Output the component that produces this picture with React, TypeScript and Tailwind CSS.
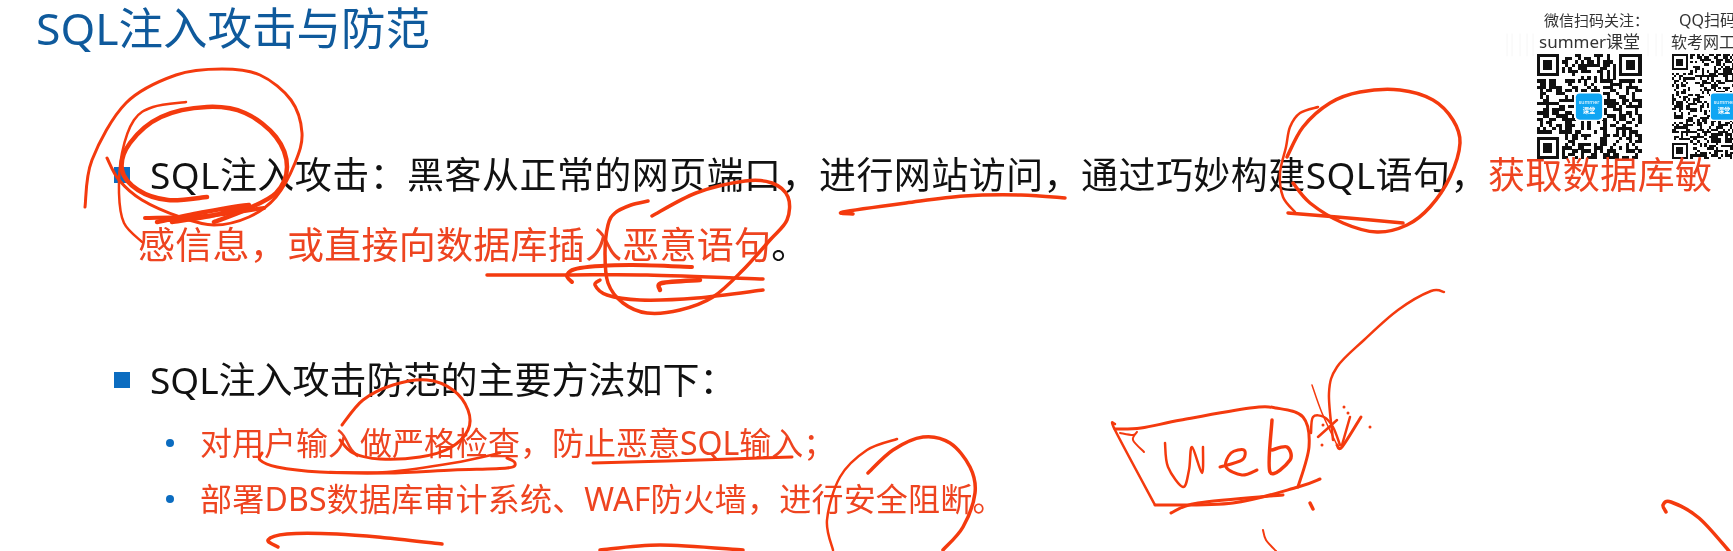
const INK = "#f43a0e";

type Pt = [number, number];
type Mark = { w: number; pts: Pt[] };

// hand-written pen strokes laid over the slide, in page pixels
const marks: Mark[] = [
  // first bullet circles
  { w: 3, pts: [[85, 207], [92, 160], [126, 103], [176, 75], [222, 69], [260, 75], [291, 100], [302, 133], [295, 163], [276, 197], [249, 217], [214, 225], [180, 217], [142, 200], [119, 180], [107, 158]] },
  { w: 4.5, pts: [[207, 197], [168, 200], [138, 190], [122, 170], [130, 143], [161, 117], [207, 107], [245, 113], [276, 137], [287, 167], [276, 193], [245, 210], [214, 222]] },
  { w: 2.5, pts: [[186, 102], [153, 107], [134, 120], [122, 153], [119, 193], [124, 223], [142, 242]] },
  { w: 4, pts: [[145, 218], [205, 216], [264, 208]] },
  { w: 4.5, pts: [[157, 222], [205, 212], [249, 205], [215, 215], [172, 222]] },
  // underline 网站访问
  { w: 3.5, pts: [[853, 214], [843, 212], [906, 203], [964, 196], [1021, 195], [1065, 198]] },
  // SQL circle
  { w: 2.5, pts: [[1318, 107], [1300, 113], [1290, 127], [1286, 147], [1280, 173], [1283, 197], [1295, 212]] },
  { w: 3.5, pts: [[1287, 157], [1303, 127], [1330, 103], [1360, 92], [1400, 90], [1433, 100], [1453, 120], [1460, 143], [1450, 177], [1430, 207], [1407, 225], [1377, 232], [1343, 223], [1310, 203], [1293, 183]] },
  { w: 3.5, pts: [[1288, 213], [1337, 217], [1403, 223]] },
  // 恶意语句 circle and strikes
  { w: 3.5, pts: [[652, 216], [696, 193], [745, 181], [772, 183], [788, 197], [787, 220], [770, 240], [743, 270], [713, 297], [680, 310], [647, 313], [623, 303], [608, 283], [605, 253], [608, 225], [615, 213], [631, 205], [648, 201]] },
  { w: 3.5, pts: [[487, 275], [567, 275], [647, 275], [763, 279]] },
  { w: 4, pts: [[572, 282], [567, 275], [580, 268], [630, 265], [692, 267]] },
  { w: 4.5, pts: [[660, 290], [662, 283], [700, 280]] },
  { w: 3.5, pts: [[600, 280], [595, 285], [607, 295], [640, 300], [697, 298], [763, 290]] },
  // 做严格检查
  { w: 3, pts: [[342, 425], [363, 400], [393, 385], [427, 380], [453, 390], [468, 410], [468, 430], [450, 448], [420, 457], [380, 459], [353, 453], [340, 440]] },
  { w: 2.5, pts: [[500, 453], [453, 463], [387, 472], [330, 472]] },
  { w: 3, pts: [[507, 458], [515, 463], [507, 468], [453, 470], [387, 473], [320, 472], [277, 467], [260, 460], [262, 453]] },
  { w: 3, pts: [[593, 463], [667, 461], [792, 457]] },
  // bottom lines
  { w: 3.5, pts: [[278, 547], [268, 540], [287, 534], [337, 534], [387, 538], [442, 544]] },
  { w: 3.5, pts: [[600, 550], [660, 545], [743, 550]] },
  // 安全阻断 circle
  { w: 3.5, pts: [[868, 473], [893, 450], [923, 437], [950, 443], [970, 467], [975, 493], [963, 527], [943, 550]] },
  { w: 2.5, pts: [[897, 439], [867, 450], [840, 477], [827, 520], [833, 550]] },
  // arrow to the web box
  { w: 2.5, pts: [[1444, 292], [1431, 291], [1398, 310], [1364, 340], [1337, 367], [1329, 393], [1333, 440]] },
  { w: 1.5, pts: [[1312, 385], [1322, 413], [1337, 445]] },
  { w: 3, pts: [[1337, 445], [1342, 447], [1361, 417]] },
  { w: 2.5, pts: [[1311, 433], [1313, 417], [1324, 417], [1333, 427], [1340, 445]] },
  { w: 2.5, pts: [[1318, 437], [1337, 420]] },
  { w: 2.5, pts: [[1350, 417], [1342, 445]] },
  // web box
  { w: 2.5, pts: [[1115, 424], [1115, 430], [1155, 505]] },
  { w: 3, pts: [[1115, 429], [1141, 428], [1181, 420], [1250, 408], [1276, 408], [1303, 417], [1309, 447], [1298, 487]] },
  { w: 3, pts: [[1155, 505], [1233, 503], [1298, 487], [1320, 479]] },
  { w: 3, pts: [[1171, 513], [1198, 503], [1283, 495]] },
  { w: 2, pts: [[1120, 433], [1133, 435], [1137, 432], [1133, 440], [1144, 452]] },
  // W e b
  { w: 2.5, pts: [[1165, 443], [1168, 467], [1183, 487], [1189, 470], [1192, 447], [1202, 473], [1203, 447]] },
  { w: 3, pts: [[1220, 467], [1242, 460], [1244, 450], [1231, 453], [1226, 467], [1242, 475], [1257, 470]] },
  { w: 3.5, pts: [[1272, 420], [1270, 472], [1290, 460], [1287, 447], [1272, 450]] },
  // loose bits along the bottom
  { w: 3.5, pts: [[1310, 503], [1313, 509]] },
  { w: 2, pts: [[1263, 530], [1266, 540], [1276, 551]] },
  { w: 3.5, pts: [[1666, 512], [1663, 505], [1671, 502], [1699, 518], [1729, 551]] },
];

const dots: Pt[] = [[1322, 445], [1344, 407], [1370, 427], [1348, 413], [1323, 425]];

// faint ghost of the previous video frame beside the qr captions
const ghost = [1507, 1512, 1520, 1527, 1533, 1648, 1656, 1662];

// catmull-rom through the points, so a stroke reads as a pen line
function smooth(pts: Pt[]) {
  let d = `M${pts[0][0]} ${pts[0][1]}`;
  for (let i = 0; i < pts.length - 1; i++) {
    const p0 = pts[i - 1] ?? pts[i];
    const p1 = pts[i];
    const p2 = pts[i + 1];
    const p3 = pts[i + 2] ?? p2;
    const c1x = p1[0] + (p2[0] - p0[0]) / 6;
    const c1y = p1[1] + (p2[1] - p0[1]) / 6;
    const c2x = p2[0] - (p3[0] - p1[0]) / 6;
    const c2y = p2[1] - (p3[1] - p1[1]) / 6;
    d += `C${c1x} ${c1y} ${c2x} ${c2y} ${p2[0]} ${p2[1]}`;
  }
  return d;
}

function QrCode({ size, seed }: { size: number; seed: number }) {
  let s = seed;
  const cells: Pt[] = [];
  const inFinder = (x: number, y: number) =>
    (x < 8 && y < 8) || (x >= size - 8 && y < 8) || (x < 8 && y >= size - 8);
  for (let y = 0; y < size; y++) {
    for (let x = 0; x < size; x++) {
      s = (s * 1103515245 + 12345) & 0x7fffffff;
      if (!inFinder(x, y) && (s >> 16) % 2 === 0) cells.push([x, y]);
    }
  }
  const finders: Pt[] = [[0, 0], [size - 7, 0], [0, size - 7]];
  const logo = size * 0.25;
  const at = (size - logo) / 2;
  return (
    <svg viewBox={`0 0 ${size} ${size}`} className="block w-[106px] h-[105px]" shapeRendering="crispEdges">
      {cells.map(([x, y]) => (
        <rect key={`${x}-${y}`} x={x} y={y} width={1.02} height={1.02} fill="#111" />
      ))}
      {finders.map(([x, y]) => (
        <g key={`${x}-${y}`}>
          <rect x={x} y={y} width={7} height={7} fill="#111" />
          <rect x={x + 1} y={y + 1} width={5} height={5} fill="#fff" />
          <rect x={x + 2} y={y + 2} width={3} height={3} fill="#111" />
        </g>
      ))}
      <rect x={at - 0.5} y={at - 0.5} width={logo + 1} height={logo + 1} rx={1.4} fill="#fff" />
      <rect x={at} y={at} width={logo} height={logo} rx={1.2} fill="#0ea5f3" shapeRendering="auto" />
      <text x={size / 2} y={at + logo * 0.42} textAnchor="middle" fontSize={logo * 0.2} fill="#fff">summer</text>
      <text x={size / 2} y={at + logo * 0.74} textAnchor="middle" fontSize={logo * 0.24} fontWeight={700} fill="#fff">课堂</text>
    </svg>
  );
}

function Square() {
  return <span className="block w-4 h-4 bg-[#0b6cc0] shrink-0" />;
}

function Dot() {
  return <span className="block w-2 h-2 rounded-full bg-[#0b6cc0] shrink-0" />;
}

export default function App() {
  return (
    <div className="relative w-[1733px] h-[551px] overflow-hidden bg-white text-[#111] blur-[0.4px] font-['Noto_Sans','Noto_Sans_CJK_SC',sans-serif]">
      <header className="flex justify-between h-[140px]">
        <h1 className="pl-9 text-[44.5px] leading-[56px] font-normal text-[#0f5a9c] whitespace-nowrap">SQL注入攻击与防范</h1>
        <div className="flex gap-[21px] -mr-11 pt-2 text-[15px] leading-[24px] text-[#333]">
          <div className="w-[114px]">
            <p className="pl-2 whitespace-nowrap">微信扫码关注：</p>
            <p className="pl-[3px] -mt-[2px] text-[17px] whitespace-nowrap">summer课堂</p>
            <QrCode size={33} seed={7} />
          </div>
          <div className="w-[106px]">
            <p className="pl-2 text-[16px] whitespace-nowrap">QQ扫码</p>
            <p className="-mt-[2px] text-[16px] whitespace-nowrap">软考网工</p>
            <QrCode size={45} seed={91} />
          </div>
        </div>
      </header>

      <section className="text-[37px] leading-[70px] whitespace-nowrap">
        <div className="flex items-center pl-[114px] gap-5 tracking-[0.44px]">
          <Square />
          <p>
            SQL注入攻击：黑客从正常的网页端口，进行网站访问，通过巧妙构建SQL语句，
            <span className="text-[#ee4420]">获取数据库敏</span>
          </p>
        </div>
        <p className="pl-[138px] tracking-[0.25px]">
          <span className="text-[#ee4420]">感信息，或直接向数据库插入恶意语句</span>。
        </p>
      </section>

      <section className="mt-[65px] whitespace-nowrap">
        <div className="flex items-center pl-[114px] gap-5 text-[37px] leading-[70px]">
          <Square />
          <p>SQL注入攻击防范的主要方法如下：</p>
        </div>
        <ul className="text-[32px] leading-[56px] text-[#ee4420]">
          <li className="flex items-center pl-[166px] gap-[26px]">
            <Dot />
            <span>对用户输入做严格检查，防止恶意SQL输入；</span>
          </li>
          <li className="flex items-center pl-[166px] gap-[26px]">
            <Dot />
            <span className="tracking-[0.2px]">部署DBS数据库审计系统、WAF防火墙，进行安全阻断。</span>
          </li>
        </ul>
      </section>

      {/* pen annotations sit on top of the slide */}
      <svg className="absolute inset-0 w-full h-full pointer-events-none" viewBox="0 0 1733 551" fill="none" strokeLinecap="round" strokeLinejoin="round">
        {ghost.map((x) => (
          <line key={x} x1={x} y1={34} x2={x} y2={56} stroke="#f6f6f6" strokeWidth={1} />
        ))}
        {marks.map((m, i) => (
          <path key={i} d={smooth(m.pts)} stroke={INK} strokeWidth={m.w} />
        ))}
        {dots.map(([x, y], i) => (
          <circle key={i} cx={x} cy={y} r={1.5} fill={INK} />
        ))}
      </svg>
    </div>
  );
}
